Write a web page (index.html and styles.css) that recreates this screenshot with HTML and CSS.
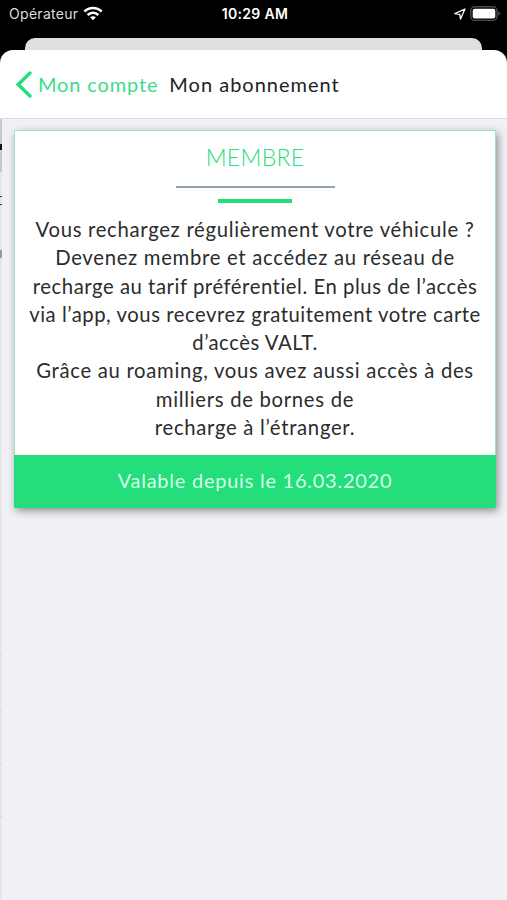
FILE: index.html
```html
<!DOCTYPE html>
<html lang="fr">
    <head>
        <meta charset="UTF-8">
        <meta name="viewport" content="width=device-width, initial-scale=1.0">
        <title>Mon abonnement</title>
        <link rel="stylesheet" href="styles.css">
    </head>
    <body>
        <div class="status-bar">
            <div class="carrier">
                <span class="carrier-name">Opérateur</span>
                <svg width="20" height="15" viewBox="0 0 20 15" fill="none" stroke="#fff" stroke-width="2.5">
                    <path d="M1.4 5.5C6.2 .8 13.8 .8 18.6 5.5"/>
                    <path d="M4.6 9C7.7 6.1 12.3 6.1 15.4 9"/>
                    <path d="M10 14.2L7.1 11.3C8.7 9.8 11.3 9.8 12.9 11.3Z" fill="#fff" stroke="none"/>
                </svg>
            </div>
            <div class="time">10:29 AM</div>
            <div class="indicators">
                <svg width="12" height="12" viewBox="0 0 12 12" fill="none" stroke="#fff" stroke-width="1.3" stroke-linejoin="round">
                    <path d="M11 1L.9 5.7L5.8 6.3L6.5 11Z"/>
                </svg>
                <svg width="31" height="16" viewBox="0 0 31 16">
                    <rect x=".8" y=".8" width="26.2" height="13.6" rx="4" fill="#000" stroke="#4c4c4c" stroke-width="1.4"/>
                    <rect x="2.7" y="2.7" width="22.6" height="9.8" rx="2" fill="#fff"/>
                    <path d="M28.3 5L30.6 7.6L28.3 10.2Z" fill="#4c4c4c"/>
                </svg>
            </div>
        </div>

        <div class="back-sheet"></div>

        <div class="sheet">
            <div class="nav">
                <a class="back" href="#">
                    <svg width="17" height="27" viewBox="0 0 17 27" fill="none" stroke="#24dd7b" stroke-width="3.4" stroke-linecap="round">
                        <path d="M15 2L3.2 13.5L15 25"/>
                    </svg>
                    <span>Mon compte</span>
                </a>
                <h1>Mon abonnement</h1>
            </div>

            <div class="content">
                <div class="previous-page">
                    <svg width="2" height="781" viewBox="0 0 2 781">
                        <rect width="2" height="781" fill="#e5e5ea"/>
                        <rect width="2" height="53" fill="#c9c9cd"/>
                        <path d="M0 25h2v6H0Z" fill="#111"/>
                        <path d="M0 77h2v1H0ZM0 85h2v1H0Z" fill="#333"/>
                        <path d="M0 131h2v8H0Z" fill="#999"/>
                        <path d="M0 535h2v1H0ZM0 591h2v1H0ZM0 644h2v1H0ZM0 697h2v1H0ZM0 750h2v1H0Z" fill="#d4d4d8"/>
                    </svg>
                </div>
                <div class="card">
                    <div class="card-body">
                        <h2>MEMBRE</h2>
                        <div class="line"></div>
                        <div class="line-accent"></div>
                        <p>
                            Vous rechargez régulièrement votre véhicule ?<br>
                            Devenez membre et accédez au réseau de<br>
                            <span class="tight">recharge au tarif préférentiel. En plus de l’accès<br>
                            via l’app, vous recevrez gratuitement votre carte<br>
                            d’accès VALT.</span><br>
                            Grâce au roaming, vous avez aussi accès à des<br>
                            milliers de bornes de<br>
                            recharge à l’étranger.
                        </p>
                    </div>
                    <div class="card-footer">Valable depuis le 16.03.2020</div>
                </div>
            </div>
        </div>
    </body>
</html>
```

FILE: styles.css
```css
* {
    margin: 0;
    padding: 0;
    box-sizing: border-box;
}

body {
    height: 900px;
    display: flex;
    flex-direction: column;
    overflow: hidden;
    background-color: #000;
    font-family: Lato, sans-serif;
}

svg {
    display: block;
    flex-shrink: 0;
}

.status-bar {
    display: grid;
    grid-template-columns: 1fr auto 1fr;
    align-items: center;
    height: 27px;
    padding: 0 6px 0 9px;
    color: #fff;
    font-family: Inter, sans-serif;
    font-size: 14px;
}

.carrier {
    display: flex;
    align-items: center;
    gap: 5px;
}

.carrier-name {
    color: #ddd;
    font-size: 14px;
    letter-spacing: 0.3px;
}

.time {
    font-weight: 600;
    letter-spacing: 0.35px;
}

.indicators {
    display: flex;
    justify-content: flex-end;
    align-items: center;
    gap: 4px;
}

.back-sheet {
    height: 12px;
    margin: 11px 25px 0;
    background-color: #e0e0e0;
    border-radius: 10px 10px 0 0;
}

.sheet {
    flex: 1;
    display: flex;
    flex-direction: column;
    background-color: #fff;
    border-radius: 13px 13px 0 0;
    overflow: hidden;
}

.nav {
    display: flex;
    align-items: center;
    gap: 11px;
    height: 69px;
    padding-left: 15px;
    border-bottom: 1px solid #dcdcde;
}

.back {
    display: flex;
    align-items: center;
    gap: 6px;
    color: #3ddc8a;
    font-size: 20px;
    letter-spacing: 0.85px;
    text-decoration: none;
}

.nav h1 {
    color: #222;
    font-size: 20px;
    font-weight: 400;
    letter-spacing: 1px;
}

.content {
    flex: 1;
    display: flex;
    align-items: flex-start;
    background-color: #f0f0f5;
}

.card {
    width: 482px;
    margin: 11px 0 0 12px;
    background-color: #fff;
    box-shadow: 2px 3px 8px rgba(0, 0, 0, 0.4);
}

.card-body {
    display: flex;
    flex-direction: column;
    align-items: center;
    height: 325px;
    border: 1px solid #9be6c6;
    border-bottom: none;
}

.card h2 {
    margin-top: 12px;
    color: #24dd7b;
    font-size: 23px;
    font-weight: 300;
    line-height: 28px;
    letter-spacing: 0.3px;
}

.line {
    width: 159px;
    height: 2px;
    margin-top: 15px;
    background-color: #8fa3b2;
}

.line-accent {
    width: 74px;
    height: 4px;
    margin-top: 11px;
    background-color: #24dd7b;
}

.card p {
    margin-top: 12px;
    color: #2c2c2c;
    font-size: 20.3px;
    line-height: 28.3px;
    letter-spacing: 0.7px;
    text-align: center;
    white-space: nowrap;
}

.card p .tight {
    letter-spacing: 0.55px;
}

.card-footer {
    height: 53px;
    background-color: #24dd7b;
    color: #d3ffe6;
    font-size: 20px;
    line-height: 51px;
    letter-spacing: 0.75px;
    text-align: center;
}
```
